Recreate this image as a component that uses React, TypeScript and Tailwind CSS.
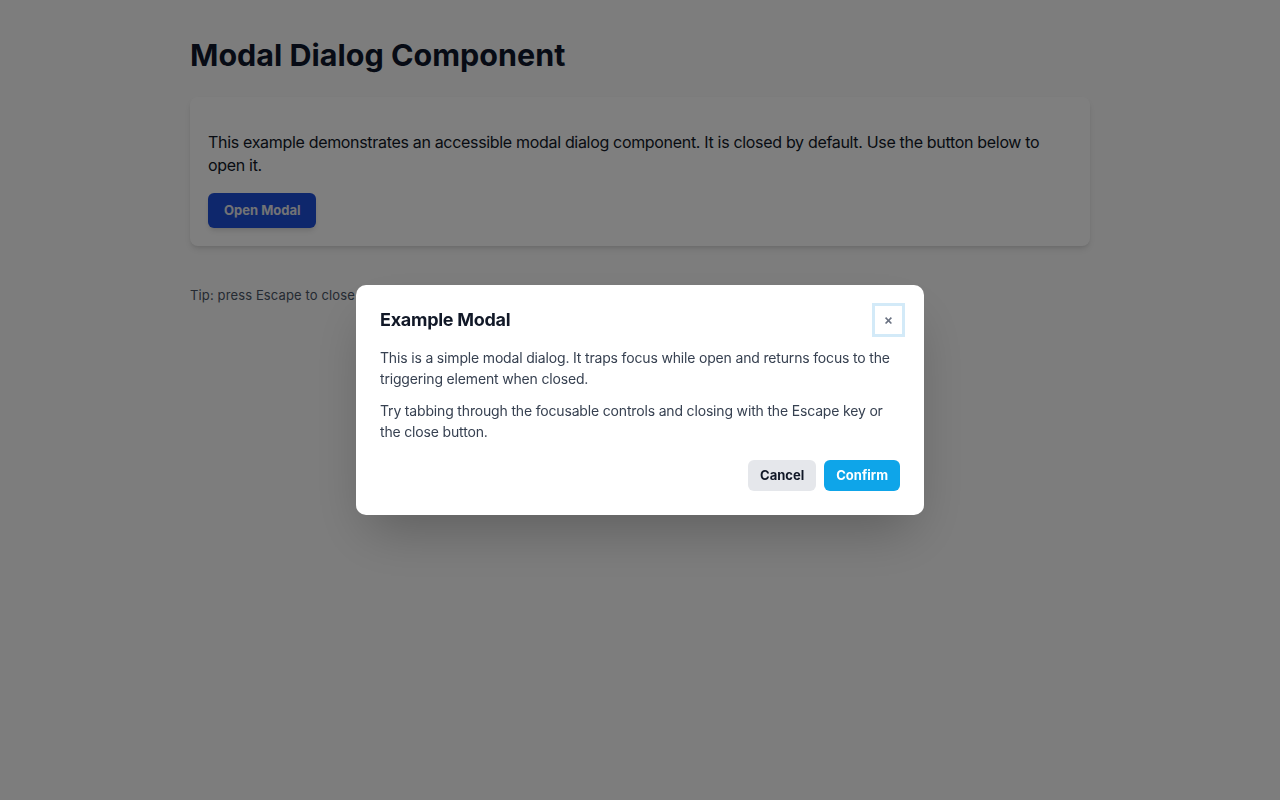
import { useEffect, useRef, useState } from "react";

export default function App() {
    const [open, setOpen] = useState<boolean>(true);
    const closeRef = useRef<HTMLButtonElement>(null);

    useEffect(() => {
        if (!open) return;
        const onKey = (e: KeyboardEvent) => {
            if (e.key === "Escape") setOpen(false);
        };
        window.addEventListener("keydown", onKey);
        return () => window.removeEventListener("keydown", onKey);
    }, [open]);

    return (
        <div className="min-h-screen bg-[#fafafa] font-['Inter',_'Noto_Sans',_sans-serif] text-gray-900">
            <main className="mx-auto max-w-[900px] pt-[37px]">
                <h1 className="text-[30.5px] font-bold leading-9 text-[#0f172a]">
                    Modal Dialog Component
                </h1>
                <section className="mt-6 rounded-lg bg-white px-[18px] py-[18px] shadow-md">
                    <p className="mb-4 mt-4 text-base leading-[23px] tracking-[-0.02em] text-[#111827]">
                        This example demonstrates an accessible modal dialog component. It is closed by default. Use the button below to open it.
                    </p>
                    <button
                        type="button"
                        onClick={() => setOpen(true)}
                        className="h-[35px] rounded-md bg-[#1d4ed8] px-4 text-[13px] font-bold text-[#e5e7eb] shadow-md"
                    >
                        Open Modal
                    </button>
                </section>
                <p className="mt-10 text-[13px] tracking-[0.01em] text-gray-600">
                    Tip: press Escape to close the modal, or click outside it.
                </p>
            </main>

            {open && (
                <div
                    className="fixed inset-0 flex items-center justify-center bg-black/50"
                    onClick={() => setOpen(false)}
                >
                    <div
                        role="dialog"
                        aria-modal="true"
                        aria-labelledby="modal-title"
                        onClick={(e) => e.stopPropagation()}
                        className="w-[568px] rounded-[10px] bg-white px-6 pb-6 pt-[18px] shadow-2xl"
                    >
                        <div className="flex items-center justify-between">
                            <h2 id="modal-title" className="text-lg font-bold tracking-[-0.015em] text-[#111827]">
                                Example Modal
                            </h2>
                            <button
                                ref={closeRef}
                                type="button"
                                aria-label="Close"
                                onClick={() => setOpen(false)}
                                className="mr-[-5px] flex h-[34px] w-[33px] items-center justify-center border-[3px] border-[#d3eaf8] bg-white text-[14px] font-semibold leading-none text-gray-500"
                            >
                                ×
                            </button>
                        </div>
                        <p className="mt-[10px] text-sm leading-[21px] tracking-[-0.012em] text-[#374151]">
                            This is a simple modal dialog. It traps focus while open and returns focus to the triggering element when closed.
                        </p>
                        <p className="mt-[11px] text-sm leading-[21px] tracking-[-0.012em] text-[#374151]">
                            Try tabbing through the focusable controls and closing with the Escape key or the close button.
                        </p>
                        <div className="mt-[18px] flex justify-end gap-2">
                            <button
                                type="button"
                                onClick={() => setOpen(false)}
                                className="h-[31px] rounded-md bg-[#e5e7eb] px-3 text-[13px] font-bold text-[#111827]"
                            >
                                Cancel
                            </button>
                            <button
                                type="button"
                                onClick={() => setOpen(false)}
                                className="h-[31px] rounded-md bg-[#0ea5e9] px-3 text-[13px] font-bold text-white"
                            >
                                Confirm
                            </button>
                        </div>
                    </div>
                </div>
            )}
        </div>
    );
}
